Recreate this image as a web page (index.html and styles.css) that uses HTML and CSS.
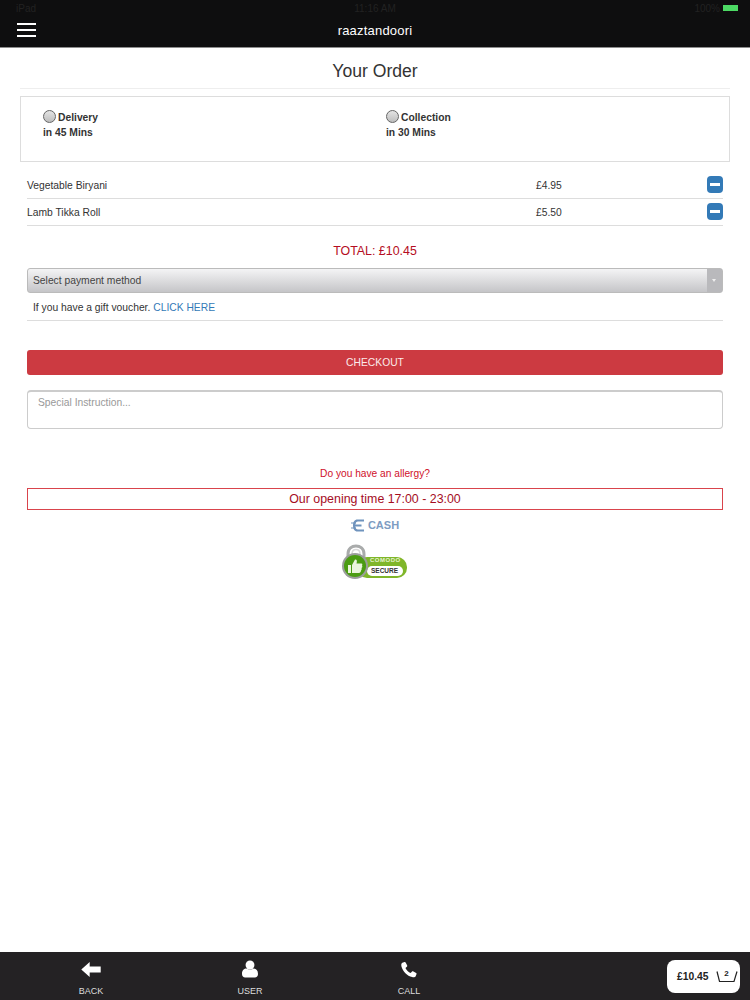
FILE: index.html
```html
<!DOCTYPE html>
<html lang="en">
  <head>
    <title>Your Order</title>
    <link rel="stylesheet" href="styles.css">
  </head>

  <body>
    <div class="page">
      <div class="header">
        <div class="status-bar">
          <span class="status-left">iPad</span>
          <span class="status-time">11:16 AM</span>
          <span class="status-right">
            <span>100%</span>
            <span class="battery"></span>
          </span>
        </div>
        <div class="title-bar">
          <div class="menu-icon"><span></span><span></span><span></span></div>
          <div class="brand">raaztandoori</div>
        </div>
      </div>

      <div class="content">
        <h1 class="page-title">Your Order</h1>

        <div class="order-type">
          <div class="order-option">
            <div class="option-line"><span class="radio"></span>Delivery</div>
            <div class="option-time">in 45 Mins</div>
          </div>
          <div class="order-option">
            <div class="option-line"><span class="radio"></span>Collection</div>
            <div class="option-time">in 30 Mins</div>
          </div>
        </div>

        <div class="main">
          <div class="item-row">
            <span class="item-name">Vegetable Biryani</span>
            <span class="item-price">£4.95</span>
            <span class="remove-btn"><span></span></span>
          </div>
          <div class="item-row">
            <span class="item-name">Lamb Tikka Roll</span>
            <span class="item-price">£5.50</span>
            <span class="remove-btn"><span></span></span>
          </div>

          <div class="total">TOTAL: £10.45</div>

          <div class="payment-select">
            <span>Select payment method</span>
            <span class="select-arrow"></span>
          </div>

          <div class="voucher">If you have a gift voucher. <a href="#">CLICK HERE</a></div>

          <div class="checkout">CHECKOUT</div>

          <div class="instructions">Special Instruction...</div>

          <div class="allergy">Do you have an allergy?</div>
          <div class="opening">Our opening time 17:00 - 23:00</div>

          <div class="cash">
            <svg width="15" height="15" viewBox="0 0 15 15">
              <path d="M13 1.500H6.500C3.500 1.500 2 4 2 7.500S3.500 13.500 6.500 13.500H13V11.500H7C5.500 11.500 4.500 10.500 4.300 8.500H10.500V6.500H4.300C4.500 4.500 5.500 3.500 7 3.500H13Z" fill="#6f93bd"/>
              <path d="M0 5H5M0 10H5" stroke="#6f93bd" stroke-width="1"/>
            </svg>
            <span>CASH</span>
          </div>

          <div class="secure-badge">
            <svg width="66" height="38" viewBox="0 0 66 38">
              <path d="M6 16V10C6 4.500 10 2 14 2S22 4.500 22 10V16" fill="none" stroke="#a9abab" stroke-width="3"/>
              <path d="M10 16V10C10 7 12 5.500 14 5.500S18 7 18 10V16" fill="none" stroke="#d8d8d8" stroke-width="1.500"/>
              <rect x="15" y="13" width="50" height="21" rx="10" fill="#7fb62a"/>
              <rect x="25" y="22" width="36" height="10" rx="5" fill="#ffffff"/>
              <circle cx="13" cy="22" r="13" fill="#9b9d9b"/>
              <circle cx="13" cy="22" r="11" fill="#4b9c12"/>
              <path transform="translate(0 -3)" d="M6 24H9V32H6ZM10 24L13 18.500C14.500 18 15.500 19.500 14.500 22.500H19.500C20.500 22.500 20.500 24 20 24.500C20.500 25.500 20.500 26.500 19.500 27C20 28 19.500 29 19 29.500C19 31 18 32 17 32H10Z" fill="#eaf5dc"/>
            </svg>
            <span class="comodo-label">COMODO</span>
            <span class="secure-label">SECURE</span>
          </div>
        </div>
      </div>

      <div class="bottom-bar">
        <div class="nav-item nav-back">
          <div class="nav-icon">
            <svg width="20" height="15" viewBox="0 0 22 17">
              <path d="M0 8.500L9.500 0V5H22V12H9.500V17Z" fill="#fff"/>
            </svg>
          </div>
          <span>BACK</span>
        </div>
        <div class="nav-item nav-user">
          <div class="nav-icon">
            <svg width="16" height="18" viewBox="0 0 18 19">
              <circle cx="9" cy="5" r="5" fill="#fff"/>
              <path d="M0 15C0 11 2.500 9 5 9C7 10.500 11 10.500 13 9C15.500 9 18 11 18 15C18 17.500 16.500 19 14.500 19H3.500C1.500 19 0 17.500 0 15Z" fill="#fff"/>
            </svg>
          </div>
          <span>USER</span>
        </div>
        <div class="nav-item nav-call">
          <div class="nav-icon">
            <svg width="16" height="17" viewBox="0 0 18 18">
              <path d="M4 0.500L1.500 1.500C0.500 2 0 3.500 0.500 5.500C2 11 7 16 12.500 17.500C14.500 18 16 17.500 16.500 16.500L17.500 14C17.700 13.500 17.500 13 17 12.800L13.500 11C13 10.800 12.500 11 12.200 11.400L10.800 13C8.500 12 6 9.500 5 7.200L6.600 5.800C7 5.500 7.200 5 7 4.500L5.200 1C5 0.500 4.500 0.300 4 0.500Z" fill="#fff"/>
            </svg>
          </div>
          <span>CALL</span>
        </div>
        <div class="cart">
          <span class="cart-total">£10.45</span>
          <span class="cart-basket">
            <svg width="22" height="12" viewBox="0 0 22 12">
              <path d="M1 0.500L3.500 10.500H18L21 0.500" fill="none" stroke="#222" stroke-width="1.200"/>
            </svg>
            <span class="cart-count">2</span>
          </span>
        </div>
      </div>
    </div>
  </body>
</html>
```

FILE: styles.css
```css
body {
  margin: 0;
  padding: 0;
  font-family: "Liberation Sans", Arial, sans-serif;
  font-size: 10.3px;
  color: #333;
  background-color: #fff;
}

.page {
  width: 750px;
  height: 1000px;
  display: flex;
  flex-direction: column;
  overflow: hidden;
}

.header {
  height: 47px;
  background-color: #0e0e0f;
  border-bottom: 1px solid #8d8d8d;
  flex-shrink: 0;
}

.status-bar {
  height: 16px;
  display: flex;
  justify-content: space-between;
  align-items: center;
  padding: 0 12px 0 16px;
  position: relative;
  color: #222;
  font-size: 10px;
}

.status-time {
  position: absolute;
  left: 0;
  right: 0;
  text-align: center;
}

.status-right {
  display: flex;
  align-items: center;
  gap: 3px;
}

.battery {
  width: 15px;
  height: 6px;
  background-color: #4cd964;
}

.title-bar {
  height: 31px;
  display: flex;
  align-items: center;
  position: relative;
}

.menu-icon {
  width: 19px;
  margin-left: 17px;
  display: flex;
  flex-direction: column;
  gap: 4px;
  margin-top: -3px;
}

.menu-icon span {
  display: block;
  height: 2px;
  background-color: #fff;
}

.brand {
  position: absolute;
  left: 0;
  right: 0;
  top: 7px;
  text-align: center;
  color: #fff;
  font-size: 13px;
  font-weight: 500;
  letter-spacing: 0.2px;
}

.content {
  flex: 1;
  padding: 0 20px;
}

.page-title {
  margin: 0;
  height: 40px;
  line-height: 46px;
  font-size: 17.6px;
  font-weight: 400;
  text-align: center;
  color: #333;
  border-bottom: 1px solid #eee;
}

.order-type {
  margin-top: 7px;
  height: 66px;
  box-sizing: border-box;
  border: 1px solid #ddd;
  display: flex;
  padding: 13px 0 0 22px;
  font-weight: bold;
  color: #333;
}

.order-option {
  width: 343px;
}

.option-line {
  display: flex;
  align-items: center;
  height: 14px;
}

.option-time {
  margin-top: 2px;
  line-height: 13px;
}

.radio {
  width: 11px;
  height: 11px;
  border: 1px solid #666;
  border-radius: 50%;
  background: linear-gradient(#e4e4e4, #bdbdbd);
  margin: -2px 2px 0 0;
}

.main {
  padding: 0 7px;
  margin-top: 10px;
}

.item-row {
  height: 26px;
  border-bottom: 1px solid #ddd;
  display: flex;
  align-items: center;
  position: relative;
  color: #333;
}

.item-name {
  width: 509px;
}

.remove-btn {
  position: absolute;
  right: 0;
  top: 4px;
  width: 16px;
  height: 17px;
  background-color: #337ab7;
  border-radius: 4px;
  display: flex;
  align-items: center;
  justify-content: center;
}

.remove-btn span {
  width: 10px;
  height: 3px;
  background-color: #fff;
}

.total {
  margin-top: 17px;
  text-align: center;
  font-size: 12.4px;
  line-height: 16px;
  color: #b50d22;
}

.payment-select {
  margin-top: 9px;
  height: 25px;
  box-sizing: border-box;
  border-radius: 3px;
  border: 1px solid #bbb;
  background: linear-gradient(#f4f4f5, #c5c5c8);
  display: flex;
  align-items: center;
  justify-content: space-between;
  padding-left: 5px;
  color: #444;
}

.select-arrow {
  width: 15px;
  height: 23px;
  background-color: #b9b9bc;
  position: relative;
}

.select-arrow::after {
  content: "";
  position: absolute;
  left: 5px;
  top: 10px;
  border-left: 2px solid transparent;
  border-right: 2px solid transparent;
  border-top: 3px solid #eee;
}

.voucher {
  height: 27px;
  line-height: 29px;
  padding-left: 6px;
  border-bottom: 1px solid #ddd;
  color: #333;
}

.voucher a {
  color: #337ab7;
  text-decoration: none;
}

.checkout {
  margin-top: 29px;
  height: 25px;
  line-height: 25px;
  background-color: #cc3a41;
  border-radius: 3px;
  text-align: center;
  color: #fbeaea;
}

.instructions {
  margin-top: 15px;
  height: 39px;
  box-sizing: border-box;
  padding: 5px 10px;
  border: 1px solid #ccc;
  border-top: 2px solid #ccc;
  border-radius: 4px;
  color: #999;
}

.allergy {
  margin-top: 38px;
  text-align: center;
  font-size: 10.2px;
  line-height: 13px;
  color: #d0112b;
}

.opening {
  margin-top: 8px;
  height: 22px;
  box-sizing: border-box;
  line-height: 20px;
  border: 1px solid #d9444c;
  text-align: center;
  font-size: 12.4px;
  color: #a50d1e;
}

.cash {
  margin-top: 7px;
  display: flex;
  justify-content: center;
  align-items: center;
  gap: 2px;
  height: 16px;
  font-size: 11px;
  font-weight: bold;
  color: #7d9cc2;
}

.secure-badge {
  margin: 11px auto 0;
  width: 66px;
  height: 38px;
  position: relative;
}

.comodo-label {
  position: absolute;
  left: 28px;
  top: 13px;
  font-size: 6px;
  font-weight: bold;
  letter-spacing: 0.5px;
  color: #e6f3d0;
}

.secure-label {
  position: absolute;
  left: 29px;
  top: 22px;
  font-size: 6.5px;
  line-height: 10px;
  font-weight: bold;
  color: #333;
}

.bottom-bar {
  height: 48px;
  flex-shrink: 0;
  background-color: #242224;
  position: relative;
  display: flex;
}

.nav-item {
  position: absolute;
  top: 8px;
  width: 60px;
  display: flex;
  flex-direction: column;
  align-items: center;
  color: #ddd;
  font-size: 9px;
  line-height: 12px;
  gap: 7px;
}

.nav-icon {
  height: 18px;
  display: flex;
  align-items: center;
}

.nav-back {
  left: 61px;
}

.nav-user {
  left: 220px;
}

.nav-call {
  left: 379px;
}

.cart {
  position: absolute;
  left: 667px;
  top: 8px;
  width: 73px;
  height: 33px;
  background-color: #fff;
  border-radius: 8px;
  display: flex;
  align-items: center;
  padding-left: 10px;
  box-sizing: border-box;
  gap: 7px;
}

.cart-total {
  font-size: 10.3px;
  font-weight: bold;
  color: #222;
}

.cart-basket {
  width: 22px;
  height: 12px;
  position: relative;
  display: flex;
}

.cart-count {
  position: absolute;
  left: 0;
  right: 0;
  top: -2px;
  text-align: center;
  font-size: 8px;
  font-weight: bold;
  line-height: 10px;
  color: #222;
}
```
